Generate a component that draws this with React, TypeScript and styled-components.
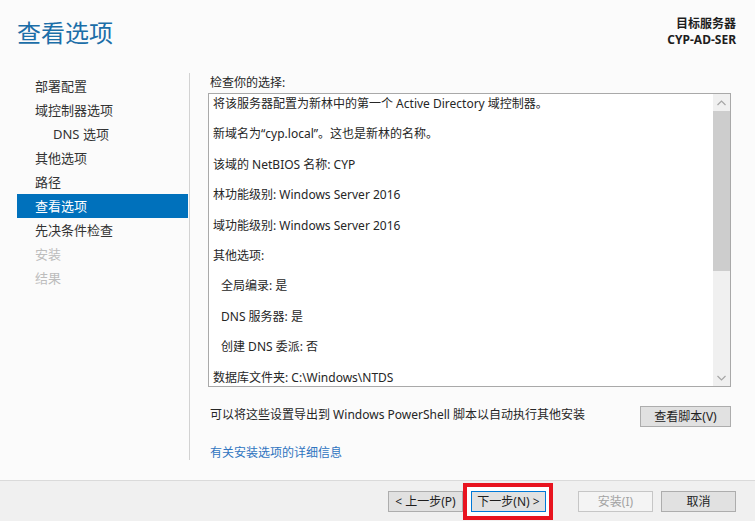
import React from "react";
import styled, { createGlobalStyle } from "styled-components";

const Global = createGlobalStyle`
  html, body { margin: 0; padding: 0; }
  body {
    background: #fbfbfb;
    font-family: "Noto Sans", "Noto Sans CJK SC", sans-serif;
    color: #262626;
    font-size: 12px;
  }
  #root { width: 755px; height: 521px; overflow: hidden; }
`;

const Window = styled.div`
  width: 755px;
  height: 521px;
  display: flex;
  flex-direction: column;
  background: #fbfbfb;
`;

const Header = styled.header`
  height: 73px;
  flex: none;
  display: flex;
  justify-content: space-between;
  align-items: flex-start;
  padding: 0 19px 0 17px;
  box-sizing: border-box;
`;

const Title = styled.h1`
  margin: 0;
  padding-top: 17px;
  font-size: 24px;
  line-height: 32px;
  font-weight: 400;
  color: #1b6ea8;
  letter-spacing: 0;
`;

const Target = styled.div`
  padding-top: 16px;
  text-align: right;
  font-size: 12px;
  line-height: 16px;
  font-weight: 700;
  color: #1e1e1e;
`;

const Body = styled.div`
  flex: 1;
  display: grid;
  grid-template-columns: 190px 1fr;
  min-height: 0;
`;

const Nav = styled.nav`
  border-right: 1px solid #d2d2d2;
  margin-bottom: 20px;
  padding: 1px 1px 0 17px;
  display: flex;
  flex-direction: column;
`;

const NavItem = styled.div<{ $active?: boolean; $disabled?: boolean; $sub?: boolean }>`
  height: 24px;
  line-height: 24px;
  font-size: 13px;
  padding-left: ${(p) => (p.$sub ? 36 : 18)}px;
  color: ${(p) => (p.$active ? "#ffffff" : p.$disabled ? "#bdbdbd" : "#333333")};
  background: ${(p) => (p.$active ? "#0071bc" : "transparent")};
  white-space: nowrap;
`;

const Content = styled.main`
  padding: 1px 24px 0 18px;
  display: flex;
  flex-direction: column;
`;

const Label = styled.div`
  padding-left: 2px;
  line-height: 18px;
  margin-bottom: 1px;
`;

const TextBox = styled.div`
  height: 294px;
  box-sizing: border-box;
  border: 1px solid #a9a9a9;
  background: #ffffff;
  display: flex;
`;

const TextArea = styled.div`
  flex: 1;
  overflow: hidden;
  padding: 1px 4px 0;
`;

const Line = styled.div<{ $indent?: boolean }>`
  line-height: 18px;
  margin-bottom: 12.4px;
  padding-left: ${(p) => (p.$indent ? 8 : 0)}px;
  white-space: nowrap;
`;

const ScrollBar = styled.div`
  width: 17px;
  flex: none;
  display: flex;
  flex-direction: column;
  background: #f0f0f0;
`;

const ScrollArrow = styled.div`
  height: 17px;
  flex: none;
  display: flex;
  align-items: center;
  justify-content: center;
  background: #f0f0f0;
`;

const Thumb = styled.div`
  height: 160px;
  flex: none;
  background: #cdcdcd;
`;

const Track = styled.div`
  flex: 1;
`;

const ExportRow = styled.div`
  margin-top: 18px;
  display: flex;
  justify-content: space-between;
  align-items: center;
`;

const ExportText = styled.div`
  padding-left: 2px;
  margin-bottom: 4px;
`;

const Button = styled.button<{ $focused?: boolean; $width?: number }>`
  width: ${(p) => p.$width ?? 75}px;
  height: 21px;
  box-sizing: border-box;
  padding: 0;
  margin: 0;
  font-family: "Noto Sans", "Noto Sans CJK SC", sans-serif;
  font-size: 12px;
  line-height: 19px;
  color: #1e1e1e;
  background: #e1e1e1;
  border: 1px solid ${(p) => (p.$focused ? "#0078d7" : "#adadad")};
  border-radius: 0;
  position: relative;
  z-index: 1;
  &:disabled {
    color: #a3a3a3;
    background: #f4f4f4;
    border-color: #c6c6c6;
  }
`;

const Link = styled.a`
  margin-top: 17px;
  padding-left: 2px;
  line-height: 18px;
  color: #2f74c0;
  text-decoration: none;
`;

const Footer = styled.footer`
  height: 41px;
  flex: none;
  box-sizing: border-box;
  border-top: 1px solid #dadada;
  background: #f0f0f0;
  display: flex;
  justify-content: flex-end;
  align-items: flex-start;
  padding: 10px 19px 0 0;
`;

const ButtonGroup = styled.div`
  display: flex;
  gap: 8px;
  & + & {
    margin-left: 32px;
  }
`;

const Highlight = styled.span`
  position: relative;
  display: inline-flex;
  &::before {
    content: "";
    position: absolute;
    left: -8px;
    right: -7px;
    top: -8px;
    bottom: -8px;
    border: 4px solid #e8141f;
    background: #ffffff;
    z-index: 0;
  }
`;

const Chevron = ({ up }: { up?: boolean }) => (
  <svg width="9" height="6" viewBox="0 0 9 6">
    <path
      d={up ? "M0.5 5 L4.5 1 L8.5 5" : "M0.5 1 L4.5 5 L8.5 1"}
      fill="none"
      stroke="#a6a6a6"
      strokeWidth="1.2"
    />
  </svg>
);

const navItems: { label: string; active?: boolean; disabled?: boolean; sub?: boolean }[] = [
  { label: "部署配置" },
  { label: "域控制器选项" },
  { label: "DNS 选项", sub: true },
  { label: "其他选项" },
  { label: "路径" },
  { label: "查看选项", active: true },
  { label: "先决条件检查" },
  { label: "安装", disabled: true },
  { label: "结果", disabled: true },
];

const lines: { text: string; indent?: boolean }[] = [
  { text: "将该服务器配置为新林中的第一个 Active Directory 域控制器。" },
  { text: "新域名为“cyp.local”。这也是新林的名称。" },
  { text: "该域的 NetBIOS 名称: CYP" },
  { text: "林功能级别: Windows Server 2016" },
  { text: "域功能级别: Windows Server 2016" },
  { text: "其他选项:" },
  { text: "全局编录: 是", indent: true },
  { text: "DNS 服务器: 是", indent: true },
  { text: "创建 DNS 委派: 否", indent: true },
  { text: "数据库文件夹: C:\\Windows\\NTDS" },
];

export default function App() {
  return (
    <>
      <Global />
      <Window>
        <Header>
          <Title>查看选项</Title>
          <Target>
            <div>目标服务器</div>
            <div>CYP-AD-SER</div>
          </Target>
        </Header>
        <Body>
          <Nav>
            {navItems.map((n) => (
              <NavItem key={n.label} $active={n.active} $disabled={n.disabled} $sub={n.sub}>
                {n.label}
              </NavItem>
            ))}
          </Nav>
          <Content>
            <Label>检查你的选择:</Label>
            <TextBox>
              <TextArea>
                {lines.map((l) => (
                  <Line key={l.text} $indent={l.indent}>
                    {l.text}
                  </Line>
                ))}
              </TextArea>
              <ScrollBar>
                <ScrollArrow>
                  <Chevron up />
                </ScrollArrow>
                <Thumb />
                <Track />
                <ScrollArrow>
                  <Chevron />
                </ScrollArrow>
              </ScrollBar>
            </TextBox>
            <ExportRow>
              <ExportText>可以将这些设置导出到 Windows PowerShell 脚本以自动执行其他安装</ExportText>
              <Button $width={91}>查看脚本(V)</Button>
            </ExportRow>
            <Link href="#">有关安装选项的详细信息</Link>
          </Content>
        </Body>
        <Footer>
          <ButtonGroup>
            <Button>&lt; 上一步(P)</Button>
            <Highlight>
              <Button $focused>下一步(N) &gt;</Button>
            </Highlight>
          </ButtonGroup>
          <ButtonGroup>
            <Button disabled>安装(I)</Button>
            <Button>取消</Button>
          </ButtonGroup>
        </Footer>
      </Window>
    </>
  );
}
